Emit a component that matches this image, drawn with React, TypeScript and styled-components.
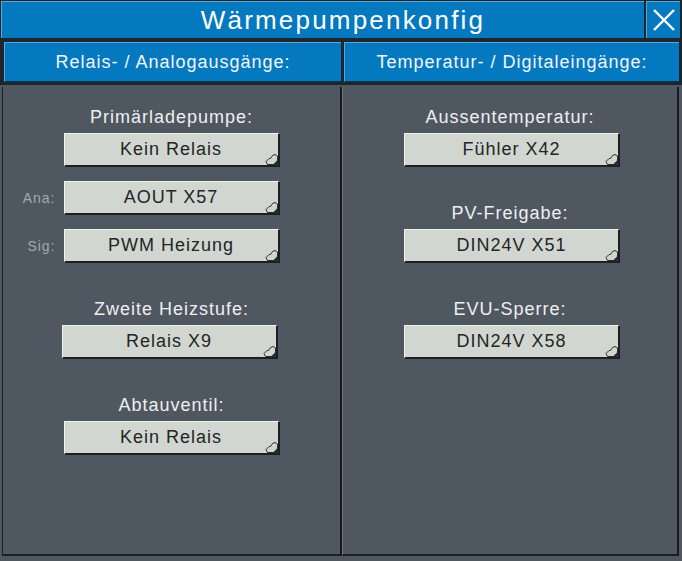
import React from 'react'
import styled, { createGlobalStyle } from 'styled-components'

const GlobalStyle = createGlobalStyle`
html, body {
  margin: 0;
  padding: 0;
  background: #4f5761;
}
* { box-sizing: border-box; }
`

const Page = styled.div`
width: 682px;
height: 561px;
background: #4f5761;
font-family: "Liberation Sans", Arial, sans-serif;
display: flex;
flex-direction: column;
overflow: hidden;
`
const Top = styled.div`
background: #1d262e;
padding: 1px 2px 3px 1px;
display: flex;
flex-direction: column;
gap: 4px;
`
const TitleRow = styled.div`
display: flex;
gap: 2px;
height: 37px;
`
const TitleBar = styled.div`
flex: 1;
background: #0479c0;
border-top: 1px solid #5aa6d6;
border-left: 1px solid #5aa6d6;
color: #ffffff;
font-size: 26px;
letter-spacing: 2.2px;
display: flex;
align-items: center;
justify-content: center;
padding-left: 40px;
`
const CloseButton = styled.div`
width: 34px;
background: #0479c0;
border-top: 1px solid #5aa6d6;
border-left: 1px solid #5aa6d6;
display: flex;
align-items: center;
justify-content: center;
`
const HeaderRow = styled.div`
display: grid;
grid-template-columns: 337px 335px;
gap: 3px;
padding-left: 3px;
height: 40px;
`
const Header = styled.div`
background: #0479c0;
border-top: 1px solid #5aa6d6;
border-left: 1px solid #5aa6d6;
border-bottom: 1px solid #0a3550;
color: #f2f6fa;
font-size: 18px;
letter-spacing: 1px;
display: flex;
align-items: center;
justify-content: center;
`
const Columns = styled.div`
display: grid;
grid-template-columns: 340px 337px;
padding-left: 2px;
padding-top: 2px;
height: 471px;
`
const Panel = styled.div<{ $first?: boolean }>`
background: #4f5761;
border-left: 1px solid ${(p) => (p.$first ? '#1a2026' : '#6f7d74')};
border-right: 2px solid #14191e;
border-bottom: 2px solid #1a2026;
padding-top: 18px;
display: flex;
flex-direction: column;
`
const Group = styled.div`
display: flex;
flex-direction: column;
margin-bottom: 34px;
`
const Label = styled.div`
height: 24px;
line-height: 24px;
color: #eef0f0;
font-size: 18px;
letter-spacing: 1px;
text-align: center;
margin-bottom: 4px;
`
const Row = styled.div`
display: grid;
grid-template-columns: 1fr 216px 1fr;
align-items: center;
column-gap: 8px;
margin-bottom: 14px;
&:last-child { margin-bottom: 0; }
`
const SideLabel = styled.div`
color: #a3a9ae;
font-size: 14px;
letter-spacing: 1px;
text-align: right;
`
const SelectButton = styled.div<{ $shift?: number }>`
position: relative;
height: 34px;
background: #d2d6d1;
border-top: 1px solid #f0f2ee;
border-left: 1px solid #f0f2ee;
border-right: 2px solid #1c2024;
border-bottom: 2px solid #1c2024;
color: #222526;
font-size: 18px;
letter-spacing: 1px;
display: flex;
align-items: center;
justify-content: center;
margin-left: ${(p) => p.$shift ?? 0}px;
margin-right: ${(p) => -(p.$shift ?? 0)}px;
`
const Corner = styled.svg`
position: absolute;
right: 0;
bottom: 0;
`

function CornerIcon() {
    return (
        <Corner width="13" height="12" viewBox="0 0 13 12">
            <path d="M2.5 11.5 L1 8.5 L4 5.5 L5.5 5.5 L7.5 2.5 L10 1.5 L12.5 3 L12.5 11.5 Z" fill="#d2d6d1" stroke="#2a2e30" strokeWidth="1" />
            <path d="M8 11.5 L12.5 7 L12.5 12 Z" fill="#2a2e30" />
        </Corner>
    )
}

type Item = { side?: string, value: string, shift?: number }
type Section = { label: string, items: Item[] }

const left: Section[] = [
    { label: 'Primärladepumpe:', items: [{ value: 'Kein Relais' }, { side: 'Ana:', value: 'AOUT X57' }, { side: 'Sig:', value: 'PWM Heizung' }] },
    { label: 'Zweite Heizstufe:', items: [{ value: 'Relais X9', shift: -2 }] },
    { label: 'Abtauventil:', items: [{ value: 'Kein Relais' }] },
]
const right: Section[] = [
    { label: 'Aussentemperatur:', items: [{ value: 'Fühler X42', shift: 2 }] },
    { label: 'PV-Freigabe:', items: [{ value: 'DIN24V X51', shift: 2 }] },
    { label: 'EVU-Sperre:', items: [{ value: 'DIN24V X58', shift: 2 }] },
]

function Column({ sections, first }: { sections: Section[], first?: boolean }) {
    return (
        <Panel $first={first}>
            {sections.map((s, i) => (
                <Group key={i}>
                    <Label>{s.label}</Label>
                    {s.items.map((it, j) => (
                        <Row key={j}>
                            <SideLabel>{it.side}</SideLabel>
                            <SelectButton $shift={it.shift}>
                                {it.value}
                                <CornerIcon />
                            </SelectButton>
                            <div />
                        </Row>
                    ))}
                </Group>
            ))}
        </Panel>
    )
}

export default function App() {
    return (
        <Page>
            <GlobalStyle />
            <Top>
                <TitleRow>
                    <TitleBar>Wärmepumpenkonfig</TitleBar>
                    <CloseButton>
                        <svg width="24" height="24" viewBox="0 0 24 24">
                            <path d="M2 2 L22 22 M22 2 L2 22" stroke="#ffffff" strokeWidth="2.4" />
                        </svg>
                    </CloseButton>
                </TitleRow>
                <HeaderRow>
                    <Header>Relais- / Analogausgänge:</Header>
                    <Header>Temperatur- / Digitaleingänge:</Header>
                </HeaderRow>
            </Top>
            <Columns>
                <Column sections={left} first />
                <Column sections={right} />
            </Columns>
        </Page>
    )
}
